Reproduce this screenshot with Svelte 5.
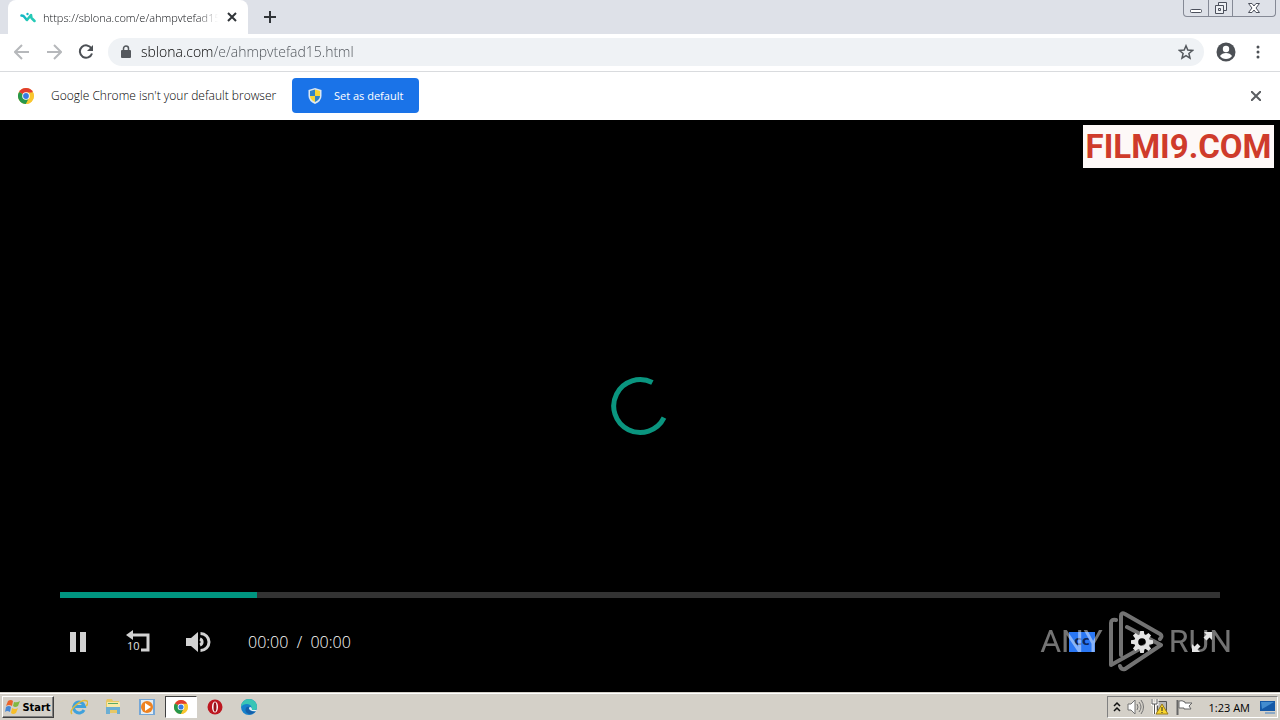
<script lang="ts">
	let url = $state('sblona.com/e/ahmpvtefad15.html');
	let progress = $state(17);
</script>

<div class="screen">
	<header class="tabstrip">
		<div class="tab">
			<svg class="favicon" width="16" height="16" viewBox="0 0 16 16" fill="none">
				<path d="M1.500 6.500l2 .5 3 3.500" stroke="#14b8c4" stroke-width="2.500" stroke-linecap="round" stroke-linejoin="round" />
				<path d="M7 11l4-5 .5 3 3 3" stroke="#25c9b6" stroke-width="2.500" stroke-linecap="round" stroke-linejoin="round" />
				<circle cx="7.500" cy="5" r="1.200" fill="#14b8c4" />
			</svg>
			<span class="tab-title">https://sblona.com/e/ahmpvtefad15</span>
			<button class="tab-close" aria-label="Close tab">
				<svg width="10" height="10" viewBox="0 0 10 10"><path d="M1 1l8 8M9 1l-8 8" stroke="#303438" stroke-width="2" /></svg>
			</button>
		</div>
		<button class="new-tab" aria-label="New tab">
			<svg width="12" height="12" viewBox="0 0 12 12"><path d="M6 0v12M0 6h12" stroke="#303438" stroke-width="2" /></svg>
		</button>
		<div class="window-buttons">
			<button aria-label="Minimize">
				<svg width="14" height="14" viewBox="0 0 14 14" fill="#fff" stroke="#4c505c"><rect x="1.500" y="8.500" width="11" height="3" rx="1" /></svg>
			</button>
			<button aria-label="Restore">
				<svg width="14" height="14" viewBox="0 0 14 14" fill="#eef0f4" stroke="#4c505c">
					<path d="M4.500 1.500h8v8h-8z" /><path d="M1.500 4.500h8v8h-8z" /><path d="M4.500 7.500h2v2h-2z" />
				</svg>
			</button>
			<button class="wide" aria-label="Close">
				<svg width="14" height="14" viewBox="0 0 14 14" fill="#fff" stroke="#4c505c">
					<path d="M1.500 2.500h3.500l2 2.500 2-2.500h3.500l-3.500 4.500 3.500 4.500h-3.500l-2-2.500-2 2.500h-3.500l3.500-4.500z" />
				</svg>
			</button>
		</div>
	</header>

	<nav class="toolbar">
		<button class="nav" aria-label="Back">
			<svg width="16" height="16" viewBox="0 0 16 16" fill="none" stroke="#b6b8bb" stroke-width="2"><path d="M15 8H2M8 1L1 8l7 7" /></svg>
		</button>
		<button class="nav" aria-label="Forward">
			<svg width="16" height="16" viewBox="0 0 16 16" fill="none" stroke="#b6b8bb" stroke-width="2"><path d="M1 8h13M8 1l7 7-7 7" /></svg>
		</button>
		<button class="nav" aria-label="Reload">
			<svg width="16" height="16" viewBox="0 0 16 16" fill="none" stroke="#4c5055" stroke-width="2"><path d="M13.500 4.500A6.200 6.200 0 1 0 14 9.500" /><path d="M15 1v6H9z" fill="#4c5055" stroke="none" /></svg>
		</button>
		<div class="omnibox">
			<svg width="10" height="14" viewBox="0 0 10 14"><rect y="5" width="10" height="8" rx="1" fill="#54585d" /><path d="M2.500 6V3.500a2.500 2.500 0 0 1 5 0V6" fill="none" stroke="#54585d" stroke-width="1.500" /></svg>
			<div class="address">
				<input type="text" aria-label="Address" bind:value={url} />
			</div>
			<button aria-label="Bookmark this page">
				<svg width="16" height="16" viewBox="0 0 16 16" fill="none" stroke="#54585d" stroke-width="1.500"><path d="M8 1.800l1.800 4.300 4.700.4-3.600 3 1.100 4.600L8 11.700l-4 2.400 1.100-4.600-3.600-3 4.700-.4z" /></svg>
			</button>
		</div>
		<button class="profile" aria-label="Profile">
			<svg width="20" height="20" viewBox="0 0 20 20"><circle cx="10" cy="10" r="9.500" fill="#4c5055" /><circle cx="10" cy="7" r="3.200" fill="#fff" /><path d="M4 14q2-3 6-3t6 3q-2 3-6 3t-6-3" fill="#fff" /></svg>
		</button>
		<button class="more" aria-label="Menu">
			<svg width="4" height="16" viewBox="0 0 4 16" fill="#4c5055"><circle cx="2" cy="3" r="1.500" /><circle cx="2" cy="8" r="1.500" /><circle cx="2" cy="13" r="1.500" /></svg>
		</button>
	</nav>

	{#snippet chromeLogo(size: number)}
		<svg width={size} height={size} viewBox="0 0 16 16">
			<circle cx="8" cy="8" r="8" fill="#f9c62f" />
			<path d="M8 8L1.070 4A8 8 0 0 1 14.930 4z" fill="#e13d30" />
			<path d="M8 8L1.070 4A8 8 0 0 0 8 16l3-6z" fill="#27974b" />
			<path d="M8 4.400h6.930A8 8 0 0 1 8 16l3.200-6z" fill="#f9c62f" />
			<circle cx="8" cy="8" r="3.800" fill="#fff" />
			<circle cx="8" cy="8" r="2.900" fill="#377be2" />
		</svg>
	{/snippet}

	<section class="infobar">
		{@render chromeLogo(16)}
		<span class="message">Google Chrome isn't your default browser</span>
		<button class="set-default">
			<svg width="14" height="16" viewBox="0 0 14 16">
				<path d="M7 0l6.500 2v6q0 5-6.500 8Q.5 13 .5 8V2z" fill="#dbe7f2" />
				<path d="M7 1.500V8H2V3z" fill="#2f83c9" /><path d="M7 1.500V8h5V3z" fill="#f6d535" />
				<path d="M2 8h5v6Q2 11.500 2 8z" fill="#f6d535" /><path d="M12 8H7v6q5-2.500 5-6z" fill="#2f83c9" />
			</svg>
			Set as default
		</button>
		<button class="dismiss" aria-label="Dismiss">
			<svg width="10" height="10" viewBox="0 0 10 10"><path d="M0 0l10 10M10 0L0 10" stroke="#5b5e62" stroke-width="2" /></svg>
		</button>
	</section>

	<main class="player">
		<div class="channel">FILMI9.COM</div>
		<svg class="spinner" width="60" height="60" viewBox="0 0 60 60" fill="none">
			<path d="M42.400 6.500A26.500 26.500 0 1 0 54 41.700" stroke="#0a957f" stroke-width="5" />
		</svg>
		<div class="controls">
			<input class="seek" type="range" min="0" max="100" aria-label="Seek" bind:value={progress} style="--played: {progress}%" />
			<div class="buttons">
				<button aria-label="Pause">
					<svg width="16" height="20" viewBox="0 0 16 20" fill="#d2d2d2"><path d="M0 0h6v20H0zM10 0h6v20h-6z" /></svg>
				</button>
				<button aria-label="Rewind 10 seconds">
					<svg width="26" height="24" viewBox="0 0 26 24">
						<path d="M7 5h16v15H16" fill="none" stroke="#d2d2d2" stroke-width="3" /><path d="M1 5l7-5v10z" fill="#d2d2d2" />
						<text x="2" y="20" font-size="11" fill="#e2e2e2">10</text>
					</svg>
				</button>
				<button aria-label="Mute">
					<svg width="26" height="22" viewBox="0 0 26 22" fill="none" stroke="#d2d2d2" stroke-width="3">
						<path d="M1 7h5l7-6v20l-7-6H1z" fill="#d2d2d2" stroke="none" /><path d="M15.500 2.500a8.500 8.500 0 0 1 0 17" /><path d="M15 8a3.200 3.200 0 0 1 0 6" />
					</svg>
				</button>
				<span class="time">00:00&nbsp; /&nbsp; 00:00</span>
				<button class="first-right" aria-label="Captions">
					<span class="cc">cc</span>
				</button>
				<button class="over" aria-label="Settings">
					<svg width="22" height="22" viewBox="-11 -11 22 22" fill="#e4e4e4">
						{#each [0, 45, 90, 135, 180, 225, 270, 315] as angle}
							<path d="M-2.600-6L-1.800-11h3.600L2.600-6z" transform="rotate({angle})" />
						{/each}
						<circle r="5.800" fill="none" stroke="#e4e4e4" stroke-width="4" />
					</svg>
				</button>
				<button class="over" aria-label="Fullscreen">
					<svg width="20" height="20" viewBox="0 0 20 20" fill="#e4e4e4">
						<path d="M12 0h8v8l-2.500-2.500-3 3-3-3 3-3zM8 20H0v-8l2.500 2.500 3-3 3 3-3 3z" />
					</svg>
				</button>
			</div>
		</div>
		<div class="watermark">
			<span>ANY</span>
			<svg width="56" height="64" viewBox="0 0 56 64" fill="none" stroke="#fff" stroke-width="4" stroke-linecap="round" stroke-linejoin="round">
				<path d="M8 11Q3 10 3 14v42l41-23M13 46V7q0-4 4-2l35 20q3 2 0 5M19 18l34 18-36 24q-4 1-5-3" />
			</svg>
			<span>RUN</span>
		</div>
	</main>

	<footer class="taskbar">
		<button class="start">
			<svg width="16" height="16" viewBox="0 0 16 16">
				<path d="M3 2q3-2 5 0L7 7Q4 5 1 7z" fill="#ec642b" /><path d="M9 3q3 1 6-1l-2 5q-3 2-5 0z" fill="#82b841" />
				<path d="M1 8q3-2 5 0l-1 5q-3-2-5 0z" fill="#4788d6" /><path d="M7 9q3 2 6 0l-2 5q-3 2-5 0z" fill="#f7be28" />
			</svg>
			Start
		</button>
		<div class="apps">
			<button aria-label="Internet Explorer">
				<svg width="18" height="18" viewBox="0 0 18 18" fill="none">
					<path d="M14 12a5.500 5.500 0 1 1 .5-3.500H5" stroke="#3fa1dc" stroke-width="3" /><path d="M2 16Q-1 13 6 7t11-4q2 2-1 5" stroke="#e2bb39" stroke-width="1.500" />
				</svg>
			</button>
			<button aria-label="Windows Explorer">
				<svg width="18" height="18" viewBox="0 0 18 18">
					<path d="M2 3l1-2h5l1 2h6v12H2z" fill="#e7c865" /><path d="M3 4h13v5H3z" fill="#f8e9a7" /><path d="M2 9h14v7h-3v-4H6v4H2z" fill="#6baed3" /><path d="M4 5h10v1H4z" fill="#59a965" />
				</svg>
			</button>
			<button aria-label="Media Player">
				<svg width="18" height="18" viewBox="0 0 18 18"><rect x="1" y="1" width="16" height="16" fill="#75a7d7" /><rect x="3" y="2" width="12" height="14" fill="#e4edf4" /><circle cx="9" cy="9" r="6" fill="#ee8221" /><path d="M7 5l6 4-6 4z" fill="#fff" /></svg>
			</button>
			<button class="running" aria-label="Google Chrome">{@render chromeLogo(14)}</button>
			<button aria-label="Opera">
				<svg width="16" height="16" viewBox="0 0 16 16"><circle cx="8" cy="8" r="7.500" fill="#bd1720" /><ellipse cx="8" cy="8" rx="3" ry="5.500" fill="#fff" /><ellipse cx="8" cy="8" rx="1.500" ry="4.800" fill="#98141b" /></svg>
			</button>
			<button aria-label="Microsoft Edge">
				<svg width="16" height="16" viewBox="0 0 16 16"><circle cx="8" cy="8" r="8" fill="#1681cb" /><path d="M0 8a8 8 0 0 1 16 0q0 4-5 3 0-6-5-6-4 0-6 3" fill="#39c5b5" /><path d="M9 8q-3 2 1 4 3 1 5 0-3 4-7 3-5-2-3-6 1-2 4-1z" fill="#155fa9" /><path d="M9 8q2 0 2 3h4l1 1q-4 1-7-1-2-2 0-3" fill="#e4f0f2" /></svg>
			</button>
		</div>
		<div class="tray">
			<svg width="8" height="12" viewBox="0 0 8 12" fill="none" stroke="#111" stroke-width="1.500"><path d="M1 5l3-3 3 3M1 10l3-3 3 3" /></svg>
			<svg width="18" height="16" viewBox="0 0 18 16" fill="none" stroke="#737373"><path d="M1 5h3l4-4v14l-4-4H1z" fill="#fff" /><path d="M10 5q2 3 0 6M12 3q4 5 0 10M14 1q5 7 0 14" /></svg>
			<svg width="18" height="16" viewBox="0 0 18 16" fill="none"><path d="M6.500 2.500h9v9h-9z" fill="#b8b8b8" stroke="#555" /><path d="M1 0v5h5V0M3.500 5v10" stroke="#fff" stroke-width="3" /><path d="M1 0v5h5V0M3.500 5v10" stroke="#555" /><path d="M11 5l6 10H5z" fill="#f8d52c" stroke="#9b7b16" /><path d="M11 8v4M11 13v1" stroke="#222" /></svg>
			<svg width="18" height="16" viewBox="0 0 18 16" stroke="#666"><path d="M2.500 1v15" stroke-width="2" /><path d="M4 2q3-1 6 1v1h7l-3 3 2 3H9V9H4z" fill="#fff" /></svg>
			<span class="clock">1:23 AM</span>
			<svg width="16" height="14" viewBox="0 0 16 14"><path d="M0 1h15v10H0z" fill="#1559a7" /><path d="M1 2h13L2 9z" fill="#438ccf" /><path d="M5 12h10v2H5z" fill="#8ba8c5" /></svg>
		</div>
	</footer>
</div>

<style>
	:global(body) {
		background: #000;
	}

	.screen {
		display: flex;
		flex-direction: column;
		min-height: 100vh;
		font-family: 'Open Sans', 'Noto Sans', sans-serif;
		font-size: 12px;
		color: #303236;
	}

	button {
		display: flex;
		align-items: center;
		justify-content: center;
		padding: 0;
		border: 0;
		background: none;
		color: inherit;
		font: inherit;
	}

	svg {
		flex: none;
	}

	.tabstrip {
		display: flex;
		align-items: flex-end;
		height: 34px;
		padding-left: 8px;
		background: #dee1e8;
	}

	.tab {
		display: flex;
		align-items: center;
		box-sizing: border-box;
		width: 240px;
		height: 34px;
		padding: 0 10px 0 12px;
		border-radius: 8px 8px 0 0;
		background: #fff;
	}

	.tab-title {
		flex: 1;
		min-width: 0;
		margin-left: 7px;
		overflow: hidden;
		color: #101216;
		font-size: 11px;
		font-weight: 300;
		white-space: nowrap;
		mask-image: linear-gradient(to left, transparent, #000 20px);
	}

	.tab-close {
		width: 12px;
		height: 16px;
		margin-left: 8px;
	}

	.new-tab {
		width: 28px;
		height: 34px;
		margin-left: 8px;
	}

	.window-buttons {
		display: flex;
		align-self: flex-start;
		margin-left: auto;
		margin-right: 4px;
		border: 1px solid #858995;
		border-top: 0;
		border-radius: 0 0 4px 4px;
	}

	.window-buttons button {
		width: 24px;
		height: 16px;
	}

	.window-buttons button + button {
		border-left: 1px solid #858995;
	}

	.window-buttons .wide {
		width: 43px;
	}

	.toolbar {
		display: flex;
		align-items: center;
		box-sizing: border-box;
		height: 38px;
		padding: 0 12px 2px 6px;
		border-bottom: 1px solid #d9dbde;
		background: #fff;
	}

	.nav {
		width: 32px;
		height: 32px;
	}

	.omnibox {
		display: flex;
		flex: 1;
		align-items: center;
		height: 28px;
		margin-left: 6px;
		padding: 0 10px 0 13px;
		border-radius: 14px;
		background: #eff2f5;
	}

	.address {
		flex: 1;
		margin-left: 10px;
	}

	.address input {
		width: 100%;
		padding: 0;
		border: 0;
		outline: 0;
		/* host is darker than the path */
		background: linear-gradient(to right, #000 72px, #4a4f55 72px);
		background-clip: text;
		color: transparent;
		font: 300 14px 'Open Sans', 'Noto Sans', sans-serif;
	}

	.profile {
		width: 20px;
		height: 28px;
		margin-left: 12px;
	}

	.more {
		width: 20px;
		height: 28px;
		margin-left: 12px;
	}

	.infobar {
		display: flex;
		align-items: center;
		box-sizing: border-box;
		height: 48px;
		padding: 0 18px 1px;
		background: #fff;
	}

	.message {
		margin-left: 17px;
		color: #000;
		font-weight: 300;
	}

	.set-default {
		gap: 12px;
		width: 127px;
		height: 35px;
		margin-left: 16px;
		border-radius: 4px;
		background: #1a73e8;
		color: #fff;
		font-size: 11px;
	}

	.dismiss {
		width: 12px;
		height: 20px;
		margin-left: auto;
	}

	.player {
		position: relative;
		display: flex;
		flex: 1;
		flex-direction: column;
		justify-content: flex-end;
		background: #000;
	}

	.channel {
		position: absolute;
		top: 5px;
		right: 6px;
		width: 191px;
		height: 43px;
		background: #fdf8f7;
		color: #cf3b2b;
		font: bold 33px/43px Roboto, 'Liberation Sans', sans-serif;
		text-align: center;
	}

	.spinner {
		position: absolute;
		top: 50%;
		left: 50%;
		transform: translate(-50%, -50%);
	}

	.controls {
		padding: 0 60px 32px;
	}

	.seek {
		display: block;
		width: 100%;
		height: 6px;
		margin: 0;
		appearance: none;
		background: linear-gradient(to right, #009580 var(--played), #333 var(--played));
	}

	.seek::-webkit-slider-thumb {
		appearance: none;
		width: 0;
		height: 0;
	}

	.buttons {
		display: flex;
		align-items: center;
		gap: 24px;
		margin-top: 26px;
	}

	.buttons button {
		width: 36px;
		height: 36px;
	}

	.buttons .over {
		position: relative;
		z-index: 1;
	}

	.time {
		margin-left: 8px;
		color: #fff;
		font-size: 16px;
		font-weight: 300;
	}

	.buttons .first-right {
		margin-left: auto;
	}

	.cc {
		width: 26px;
		height: 20px;
		background: #2a77f4;
		color: #0a255c;
		font: bold 13px/18px 'DejaVu Sans', sans-serif;
	}

	.watermark {
		position: absolute;
		right: 48px;
		bottom: 19px;
		display: flex;
		align-items: center;
		gap: 5px;
		color: #fff;
		font: 32px/64px Roboto, 'Liberation Sans', sans-serif;
		opacity: 0.45;
		pointer-events: none;
	}

	.taskbar {
		display: flex;
		align-items: center;
		box-sizing: border-box;
		height: 28px;
		border-top: 1px solid #d4d0c8;
		background: #d4d0c8;
		box-shadow: inset 0 1px #fff;
	}

	.start {
		gap: 1px;
		box-sizing: border-box;
		width: 52px;
		height: 22px;
		margin: 1px 0 0 2px;
		border: 1px solid;
		border-color: #fff #404040 #404040 #fff;
		box-shadow: inset -1px -1px #808080;
		color: #000;
		font: bold 11px 'DejaVu Sans Condensed', 'DejaVu Sans', sans-serif;
	}

	.apps {
		display: flex;
		gap: 2px;
		margin: 1px 0 0 9px;
	}

	.apps button {
		box-sizing: border-box;
		width: 32px;
		height: 22px;
	}

	.apps .running {
		border: 1px solid;
		border-color: #404040 #fff #fff #404040;
		background: #fff;
	}

	.tray {
		display: flex;
		align-items: center;
		gap: 6px;
		box-sizing: border-box;
		height: 22px;
		margin: 1px 2px 0 auto;
		padding: 0 1px 0 5px;
		border: 1px solid;
		border-color: #808080 #fff #fff #808080;
		color: #000;
	}

	.clock {
		margin: 0 4px 0 10px;
		font-size: 11px;
	}
</style>
